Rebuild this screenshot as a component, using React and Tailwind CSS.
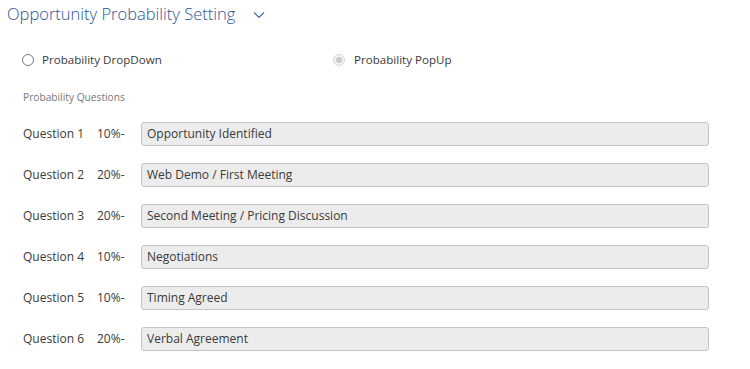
import React from "react";

const rows = [
  ["Question 1", "10%-", "Opportunity Identified"],
  ["Question 2", "20%-", "Web Demo / First Meeting"],
  ["Question 3", "20%-", "Second Meeting / Pricing Discussion"],
  ["Question 4", "10%-", "Negotiations"],
  ["Question 5", "10%-", "Timing Agreed"],
  ["Question 6", "20%-", "Verbal Agreement"],
];

export default function App() {
  return (
    <div className="w-[750px] h-[369px] bg-white overflow-hidden text-[#3a3a3a] font-['Open_Sans',sans-serif]">
      <div className="flex items-center h-[29px] pl-[7px]">
        <span className="text-[16.5px] font-light text-[#2c5596] leading-none">Opportunity Probability Setting</span>
        <svg className="ml-[18px] mt-[1px]" width="12" height="8" viewBox="0 0 12 8" fill="none">
          <path d="M1 1.5 L6 6.5 L11 1.5" stroke="#3d6aa8" strokeWidth="1.2" />
        </svg>
      </div>
      <div className="flex items-center mt-[22px] h-[18px] text-[11.6px]">
        <div className="flex items-center pl-[22px] w-[333px]">
          <span className="w-[12px] h-[12px] rounded-full border border-[#777] bg-white" />
          <span className="ml-[8px]">Probability DropDown</span>
        </div>
        <div className="flex items-center">
          <span className="w-[12px] h-[12px] rounded-full border border-[#d5d5d5] bg-[#f2f2f2] flex items-center justify-center">
            <span className="w-[6px] h-[6px] rounded-full bg-[#c8c8c8]" />
          </span>
          <span className="ml-[9px]">Probability PopUp</span>
        </div>
      </div>
      <div className="pl-[23px] mt-[20px] text-[10.2px] text-[#777] leading-[16px]">Probability Questions</div>
      <div className="flex flex-col gap-[17px] mt-[17px]">
        {rows.map(([q, p, t]) => (
          <div key={q} className="flex items-center h-[24px] text-[12px]">
            <span className="pl-[23px] w-[97px]">{q}</span>
            <span className="w-[44px]">{p}</span>
            <div className="w-[568px] h-[24px] rounded-[3px] border border-[#c4c4c4] bg-[#ececec] flex items-center pl-[5px]">
              {t}
            </div>
          </div>
        ))}
      </div>
    </div>
  );
}
